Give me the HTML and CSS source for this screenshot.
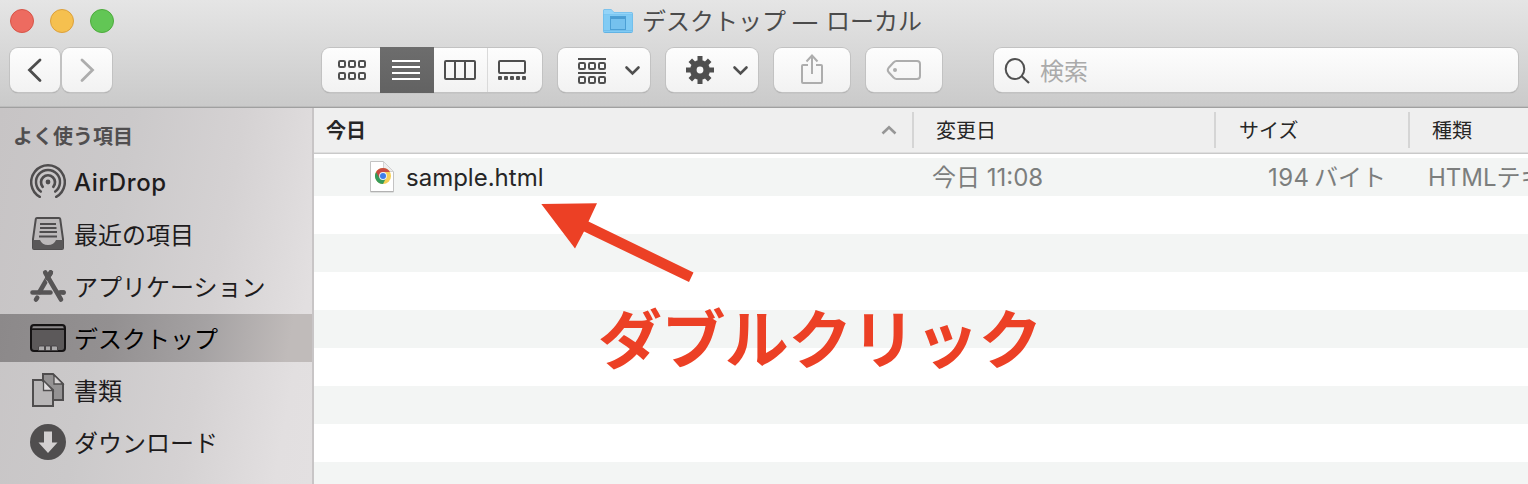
FILE: index.html
```html
<!DOCTYPE html>
<html lang="ja">
<head>
<meta charset="utf-8">
<title>デスクトップ — ローカル</title>
<link rel="stylesheet" href="styles.css">
</head>
<body>
<div class="window">
  <header class="titlebar">
    <div class="title-row">
      <div class="lights"><span class="light red"></span><span class="light yellow"></span><span class="light green"></span></div>
      <div class="title">
        <svg class="folder" width="32" height="28" viewBox="0 0 32 28">
          <path d="M1 4Q1 2 3 2H9L12 5H29Q31 5 31 7V24Q31 26 29 26H3Q1 26 1 24Z" fill="#62b3e4"/>
          <path d="M1.5 4Q1.500 2.500 3 2.500H9L12 5.500H29Q30.500 5.500 30.500 7V7.500H1.500Z" fill="#94d4f8"/>
          <path d="M1.500 7.500H30.500V25H1.500Z" fill="#81cbf4"/>
          <path d="M1 23.500H31" stroke="#72bdea"/>
          <rect x="8.500" y="9.500" width="15" height="13" fill="#75c1ee" stroke="#4b9fd5"/>
          <path d="M9 11H23" stroke="#3d91c9" stroke-width="1.500"/>
        </svg>
        <span class="title-text">デスクトップ<span class="dash">—</span>ローカル</span>
      </div>
    </div>
    <div class="toolbar">
      <div class="btn nav"><svg width="50" height="44" viewBox="0 0 50 44"><path d="M30 12 19.500 22 30 32.500" fill="none" stroke="#4d4d4d" stroke-width="2.800" stroke-linecap="round"/></svg></div>
      <div class="btn nav forward"><svg width="50" height="44" viewBox="0 0 50 44"><path d="M20 12 30.500 22 20 32.500" fill="none" stroke="#adadad" stroke-width="2.800" stroke-linecap="round"/></svg></div>
      <div class="btn views">
        <div class="seg seg-icon"><svg width="58" height="44" viewBox="0 0 58 44"><g fill="none" stroke="#4f4f4f" stroke-width="2"><rect x="17" y="13" width="6" height="6" rx="1.300"/><rect x="27" y="13" width="6" height="6" rx="1.300"/><rect x="37" y="13" width="6" height="6" rx="1.300"/><rect x="17" y="25" width="6" height="6" rx="1.300"/><rect x="27" y="25" width="6" height="6" rx="1.300"/><rect x="37" y="25" width="6" height="6" rx="1.300"/></g></svg></div>
        <div class="seg seg-list"><svg width="54" height="46" viewBox="0 0 54 46"><path d="M12 14H40M12 20H40M12 26H40M12 32H40" stroke="#fff" stroke-width="2"/></svg></div>
        <div class="seg seg-column"><svg width="53" height="44" viewBox="0 0 53 44"><g fill="none" stroke="#4f4f4f" stroke-width="2"><rect x="11" y="13" width="30" height="18" rx="1"/><path d="M21 13V31M31 13V31"/></g></svg></div>
        <div class="seg seg-gallery"><svg width="54" height="44" viewBox="0 0 54 44"><rect x="11" y="13" width="26" height="12" rx="1" fill="none" stroke="#4f4f4f" stroke-width="2"/><g fill="#4f4f4f"><rect x="10" y="28" width="4" height="4" rx="1"/><rect x="16" y="28" width="4" height="4" rx="1"/><rect x="22" y="28" width="4" height="4" rx="1"/><rect x="28" y="28" width="4" height="4" rx="1"/><rect x="34" y="28" width="4" height="4" rx="1"/></g></svg></div>
      </div>
      <div class="btn menu"><svg width="92" height="44" viewBox="0 0 92 44"><g fill="none" stroke="#4f4f4f" stroke-width="2"><path d="M20 11H48M20 25H48"/><rect x="21" y="15" width="6" height="6" rx="1.300"/><rect x="31" y="15" width="6" height="6" rx="1.300"/><rect x="41" y="15" width="6" height="6" rx="1.300"/><rect x="21" y="29" width="6" height="6" rx="1.300"/><rect x="31" y="29" width="6" height="6" rx="1.300"/><rect x="41" y="29" width="6" height="6" rx="1.300"/><path d="M68.500 19.500 74.500 25.500 80.500 19.500" stroke-width="2.600" stroke-linecap="round"/></g></svg></div>
      <div class="btn menu"><svg width="92" height="44" viewBox="0 0 92 44"><g fill="none" stroke="#4f4f4f"><circle cx="34" cy="22" r="6.700" stroke-width="6.600"/><g stroke-width="5"><path d="M34 8V13M34 31V36M20 22H25M43 22H48"/><path d="M24.300 12.300 27.500 15.500M40.500 28.500 43.700 31.700M24.300 31.700 27.500 28.500M40.500 15.500 43.700 12.300"/></g><path d="M68.500 19.500 74.500 25.500 80.500 19.500" stroke-width="2.600" stroke-linecap="round"/></g></svg></div>
      <div class="btn action"><svg width="76" height="44" viewBox="0 0 76 44"><path d="M34 17H29Q28 17 28 18V34Q28 35 29 35H47Q48 35 48 34V18Q48 17 47 17H42M38 26V8M32.500 13.500 38 7.500 43.500 13.500" fill="none" stroke="#adadad" stroke-width="2"/></svg></div>
      <div class="btn action"><svg width="76" height="44" viewBox="0 0 76 44"><path d="M30.500 13H51Q54 13 54 16V28Q54 31 51 31H30.500Q29 31 27.500 29.500L22.500 24Q21 22 22.500 20L27.500 14.500Q29 13 30.500 13Z" fill="none" stroke="#adadad" stroke-width="2"/><circle cx="29" cy="22" r="2" fill="#adadad"/></svg></div>
      <div class="btn search"><svg width="46" height="44" viewBox="0 0 46 44"><ellipse cx="21" cy="21" rx="9.300" ry="10" fill="none" stroke="#505050" stroke-width="2"/><path d="M27.500 28 35 35" stroke="#505050" stroke-width="2.200"/></svg><span>検索</span></div>
    </div>
  </header>
  <div class="content">
    <nav class="sidebar">
      <h2>よく使う項目</h2>
      <div class="item"><svg width="36" height="36" viewBox="0 0 36 36"><g fill="none" stroke="#4f4d4e" stroke-width="2.500" stroke-linecap="round"><path d="M9.800 32.800A16.800 16.800 0 1 1 26.200 32.800"/><path d="M10.800 27.600A12 12 0 1 1 25.200 27.600"/><path d="M12.700 22.800A7 7 0 1 1 23.300 22.800" stroke-width="2.700"/></g><circle cx="18" cy="18" r="2.400" fill="#4f4d4e"/></svg><span class="latin">AirDrop</span></div>
      <div class="item"><svg width="36" height="36" viewBox="0 0 36 36"><path d="M7 2H29Q30 2 30.200 3L33 23V32Q33 33 32 33H4Q3 33 3 32V23L5.800 3Q6 2 7 2Z" fill="#bcb9ba" stroke="#4f4d4e" stroke-width="2"/><path d="M3 24H10Q12 29 18 29T26 24H33V33H3Z" fill="#5a5859"/><path d="M10 8H26M10 12H26.500M9.500 16H27M9 20.500H27" stroke="#4f4d4e" stroke-width="1.800"/></svg><span>最近の項目</span></div>
      <div class="item"><svg width="36" height="36" viewBox="0 0 36 36"><g stroke="#575556" stroke-width="4.600" stroke-linecap="round"><path d="M2.500 24.500H20.500M29.500 24.500H33.500"/><path d="M20.800 4.500 9.500 24M7.200 29.700 6 31.500"/></g><path d="M18 9 31.500 31.500" stroke="#cecbcc" stroke-width="6.500"/><path d="M15.200 4.500 31 31.500" stroke="#575556" stroke-width="4.600" stroke-linecap="round"/><path d="M20.800 4.500 17.500 10.200M29.500 24.500H33.500" stroke="#575556" stroke-width="4.600" stroke-linecap="round"/></svg><span>アプリケーション</span></div>
      <div class="item selected"><svg width="36" height="36" viewBox="0 0 36 36"><rect x="1" y="5" width="34" height="26" rx="3" fill="#5c595a" stroke="#151314" stroke-width="2"/><path d="M3 7.200H33" stroke="#a3a0a1"/><path d="M2 9.200H34" stroke="#151314" stroke-width="1.500"/><g fill="#aba9aa" stroke="#3d3b3c" stroke-width=".8"><path d="M9.500 26H14.500V30.500H8.500V27Z"/><path d="M15.500 26H20.500V30.500H15.500Z"/><path d="M21.500 26H26.500L27.500 27V30.500H21.500Z"/></g></svg><span>デスクトップ</span></div>
      <div class="item"><svg width="36" height="36" viewBox="0 0 36 36"><g stroke="#4f4d4e" stroke-width="2"><path d="M13 2H23L33 12V28H13Z" fill="#949293"/><path d="M24 3V12H33Z" fill="#d6d3d4" stroke-width="1.300"/><path d="M3 8H12L23 18V34H3Z" fill="#b8b6b7"/><path d="M13.500 8.500V18.500H23Z" fill="#e0dddf" stroke-width="1.300"/></g></svg><span>書類</span></div>
      <div class="item"><svg width="36" height="36" viewBox="0 0 36 36"><circle cx="18" cy="18" r="18" fill="#504e4f"/><path d="M14 7.500H22V18.500H27.500L18 29 8.500 18.500H14Z" fill="#d3d0d1"/></svg><span>ダウンロード</span></div>
    </nav>
    <main class="list">
      <div class="columns">
        <div class="col name"><b>今日</b><svg width="16" height="10" viewBox="0 0 16 10"><path d="M1.500 8.500 8 2.200 14.500 8.500" fill="none" stroke="#969696" stroke-width="2.600"/></svg></div>
        <div class="col date">変更日</div>
        <div class="col size">サイズ</div>
        <div class="col kind">種類</div>
      </div>
      <div class="rows">
        <div class="row">
          <div class="cell file"><svg width="28" height="34" viewBox="0 0 28 34"><path d="M2.500 1.500H15.500L25.500 11.500V31.500H2.500Z" fill="#fff" stroke="#c3c3c3"/><path d="M2.500 31.800H25.500" stroke="#aaa"/><path d="M15.500 1.500V11.500H25.500Z" fill="#eee" stroke="#d2d2d2"/><circle cx="15" cy="16" r="8" fill="#f6cf55"/><path d="M15 16 8.070 12A8 8 0 0 0 15 24L18 18Z" fill="#369b5b"/><path d="M8.070 12A8 8 0 0 1 21.930 12H15L11.500 18Z" fill="#c94b40"/><circle cx="15" cy="16" r="3.900" fill="#edf2fb"/><circle cx="15" cy="16" r="3" fill="#3e7ee8"/></svg><span>sample.html</span></div>
          <div class="cell modified">今日 <span>11:08</span></div>
          <div class="cell bytes"><span class="count">194</span>バイト</div>
          <div class="cell type"><span>HTML</span>テキ</div>
        </div>
        <div class="row"></div><div class="row"></div><div class="row"></div><div class="row"></div><div class="row"></div><div class="row"></div><div class="row"></div><div class="row"></div>
      </div>
    </main>
  </div>
  <svg class="arrow" width="156" height="84" viewBox="0 0 156 84"><path d="M1.300 2 57 1.200 48.500 19.500 153.500 70.500 149 80 44 29.500 35 46.500Z" fill="#ec4025"/></svg>
  <div class="callout">ダブルクリック</div>
</div>
</body>
</html>
```
FILE: styles.css
```css
* { box-sizing: border-box; }
body { margin: 0; font-family: Inter, "Noto Sans CJK JP", sans-serif; font-size: 24px; color: #262626; }
svg { display: block; flex: none; }
.window { position: relative; width: 1528px; height: 484px; overflow: hidden; background: #fff; }

.titlebar { height: 108px; background: linear-gradient(#e5e5e5, #cacaca); border-bottom: 1px solid #a0a0a0; box-shadow: inset 0 -1px #bcbcbc; }
.title-row { display: grid; grid-template-columns: 602px 1fr; height: 40px; align-items: center; }
.lights { display: flex; gap: 16px; padding-left: 10px; }
.light { width: 24px; height: 24px; border-radius: 50%; border: 1px solid; }
.red { background: #ed6b60; border-color: #d75447; }
.yellow { background: #f5c04f; border-color: #dca03b; }
.green { background: #62c655; border-color: #4dab3c; }
.title { display: flex; align-items: center; gap: 8px; color: #4b4b4b; }
.folder { margin-bottom: 1px; }
.title-text { padding-top: 2px; line-height: 40px; white-space: nowrap; }
.dash { display: inline-block; width: 40px; padding-left: 7px; }

.toolbar { display: flex; height: 60px; padding: 8px 10px 0; }
.btn { height: 44px; border-radius: 8px; background: linear-gradient(#fdfdfd, #f2f2f2); box-shadow: 0 0 0 1px #c2c2c2, 0 1px 1px 0 #8e8e8e; display: flex; margin-right: 16px; }
.nav { width: 50px; margin-right: 2px; }
.forward { margin-right: 210px; }
.views { width: 220px; }
.seg { height: 44px; }
.seg-list { height: 46px; margin-top: -1px; background: linear-gradient(#6d6d6d, #626262); }
.seg-gallery { border-left: 1px solid #dadada; width: 55px; }
.menu { width: 92px; }
.action { width: 76px; }
.action + .search { margin-left: 36px; }
.search { flex: 1; margin-right: 0; min-width: 0; color: #aaa; line-height: 47px; }

.content { display: grid; grid-template-columns: 314px 1fr; height: 376px; }
.sidebar { border-right: 2px solid #c8c5c6; background: linear-gradient(100deg, #c7c4c5 0%, #cbc9ca 35%, #d5d2d3 65%, #e2dfe0 90%, #e3e0e1 100%); }
.sidebar h2 { height: 50px; margin: 0; padding: 4px 0 0 13px; font-size: 20px; line-height: 50px; font-weight: 700; color: #504e4f; }
.item { height: 48px; margin-bottom: 4px; padding-left: 30px; display: flex; align-items: center; gap: 8px; line-height: 48px; color: #1e1c1d; white-space: nowrap; }
.item span { font-family: "Noto Sans CJK JP", sans-serif; }
.item .latin { font-family: Inter, sans-serif; padding-top: 2px; letter-spacing: .65px; font-weight: 450; }
.selected { color: #000; background: linear-gradient(100deg, #8c898a 0%, #939091 35%, #a5a2a3 65%, #c0bbba 92%); }

.list { min-width: 0; overflow: hidden; }
.columns { height: 46px; display: grid; grid-template-columns: 600px 302px 194px 1fr; background: #efefef; border-bottom: 1px solid #c9c9c9; box-shadow: inset 0 -1px #dedede; font-size: 20px; line-height: 36px; }
.col { display: flex; align-items: center; height: 36px; margin-top: 4px; padding-top: 2px; border-right: 2px solid #d5d5d5; white-space: nowrap; }
.name { padding-left: 12px; justify-content: space-between; padding-right: 15px; }
.name svg { margin-bottom: 2px; }
.date { padding-left: 22px; }
.size { padding-left: 23px; }
.kind { padding-left: 22px; border: 0; }
.rows { padding-top: 4px; }
.row { height: 38px; line-height: 38px; display: grid; grid-template-columns: 618px 264px 200px 1fr; }
.row:nth-child(odd) { background: #f3f5f4; }
.cell { color: #7c7e7d; white-space: nowrap; padding-top: 1px; height: 38px; }
.file { display: flex; align-items: center; gap: 10px; padding-left: 54px; color: #262626; }
.file svg { margin-bottom: 2px; }
.bytes { padding-left: 72px; }
.count { display: inline-block; width: 46px; letter-spacing: .4px; }
.type { padding-left: 32px; }

.arrow { position: absolute; left: 540px; top: 202px; }
.callout { position: absolute; left: 598px; top: 293px; font-size: 64px; line-height: 94px; letter-spacing: -.6px; font-weight: 700; color: #ec4025; white-space: nowrap; }
```
